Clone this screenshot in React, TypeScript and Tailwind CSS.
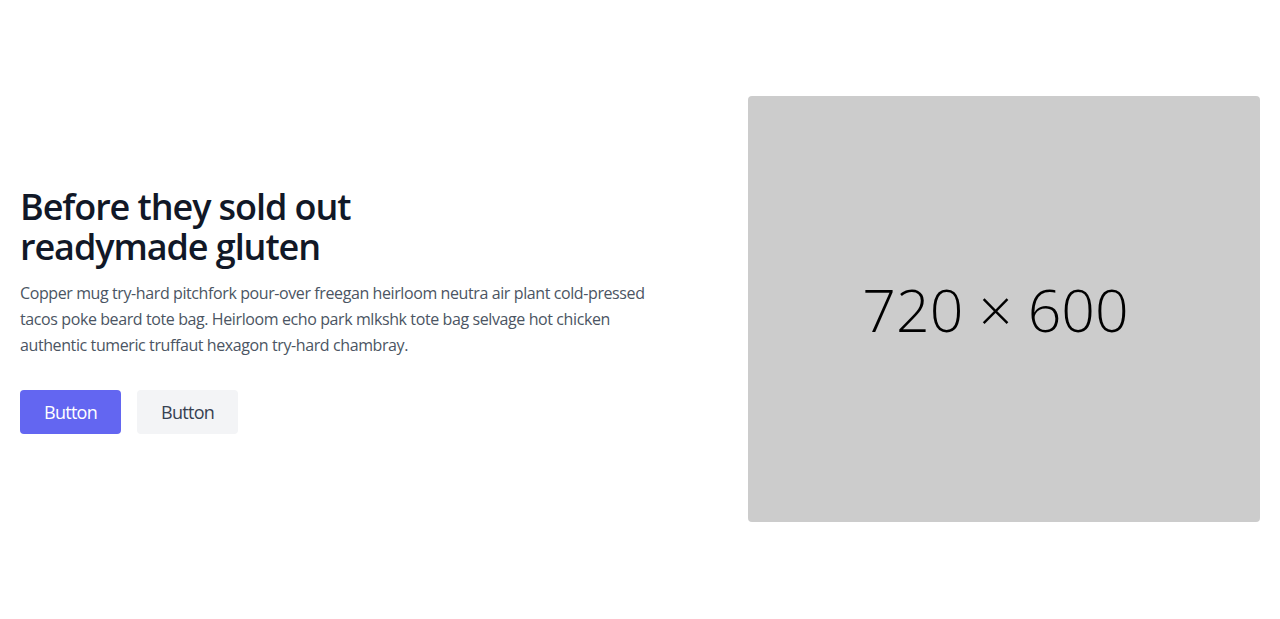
export default function App() {
  return (
    <section className="text-[#4b5563] bg-white font-['Open_Sans',sans-serif]">
      <div className="mx-auto flex items-center px-5 py-24">
        <div className="flex grow flex-col items-start pr-24 text-left">
          <h1 className="mt-[3px] mb-[13px] text-4xl font-semibold text-[#111827] tracking-[-0.03em]">
            Before they sold out
            <br />
            readymade gluten
          </h1>
          <p className="mb-8 text-[16px] leading-[26px] tracking-[-0.025em]">
            Copper mug try-hard pitchfork pour-over freegan heirloom neutra air plant cold-pressed tacos poke beard
            tote bag. Heirloom echo park mlkshk tote bag selvage hot chicken authentic tumeric truffaut hexagon
            try-hard chambray.
          </p>
          <div className="flex">
            <button className="inline-flex rounded border-0 bg-[#6366f1] px-6 py-2 text-lg tracking-[-0.04em] text-white">
              Button
            </button>
            <button className="ml-4 inline-flex rounded border-0 bg-[#f3f4f6] px-6 py-2 text-lg tracking-[-0.04em] text-[#374151]">
              Button
            </button>
          </div>
        </div>
        <div className="w-full max-w-lg shrink-0">
          <div className="flex h-[426px] w-full items-center justify-center rounded bg-[#cccccc] pr-[17px]">
            <span className="text-[59px] font-light text-black">720 × 600</span>
          </div>
        </div>
      </div>
    </section>
  )
}
